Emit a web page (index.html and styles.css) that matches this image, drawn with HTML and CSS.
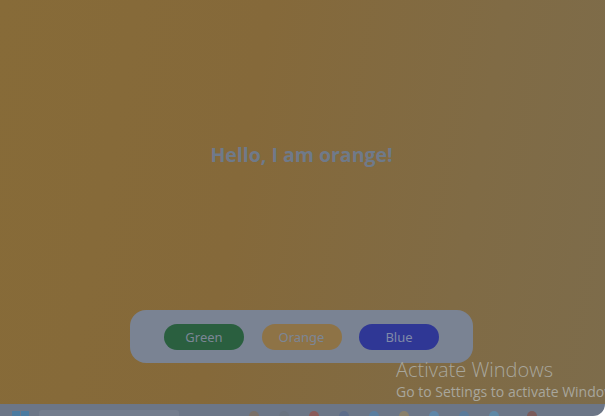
FILE: index.html
```html
<!DOCTYPE html>
<html>
<head>
<meta charset="utf-8">
<link rel="stylesheet" href="styles.css">
</head>
<body>
<div class="screen">
  <main class="app">
    <h1 class="title">Hello, I am orange!</h1>
    <div class="panel">
      <button class="btn btn-green">Green</button>
      <button class="btn btn-orange">Orange</button>
      <button class="btn btn-blue">Blue</button>
    </div>
  </main>
  <div class="taskbar">
    <span class="tb-start"><i></i><i></i></span>
    <span class="tb-search"></span>
    <span class="tb-icon c1"></span>
    <span class="tb-icon c2"></span>
    <span class="tb-icon c3"></span>
    <span class="tb-icon c4"></span>
    <span class="tb-icon c5"></span>
    <span class="tb-icon c6"></span>
    <span class="tb-icon c7"></span>
    <span class="tb-icon c8"></span>
    <span class="tb-icon c9"></span>
    <span class="tb-icon c10"></span>
  </div>
  <div class="watermark">
    <div class="wm-title">Activate Windows</div>
    <div class="wm-sub">Go to Settings to activate Windows</div>
  </div>
</div>
</body>
</html>
```
FILE: styles.css
```css
* { box-sizing: border-box; }
html, body {
  margin: 0;
  background: #ffffff;
  width: 614px;
  height: 416px;
  overflow: hidden;
}
.screen {
  position: relative;
  width: 605px;
  height: 416px;
  overflow: hidden;
  border-bottom-right-radius: 12px;
  display: flex;
  flex-direction: column;
}
.app {
  height: 404px;
  background: linear-gradient(100deg, #876b38 0%, #85693a 40%, #806b45 75%, #7d6c4b 100%);
  display: flex;
  flex-direction: column;
  align-items: center;
  padding-top: 142px;
  padding-right: 2px;
}
.title {
  margin: 0;
  font-family: "Open Sans", sans-serif;
  font-weight: 700;
  font-size: 19.5px;
  line-height: 26px;
  color: #6f7a8a;
}
.panel {
  margin-top: 142px;
  width: 343px;
  height: 53px;
  border-radius: 16px;
  background: #7a8393;
  display: flex;
  align-items: center;
  justify-content: center;
  gap: 17.5px;
}
.btn {
  width: 80px;
  height: 26px;
  border: none;
  border-radius: 13px;
  font-family: "Noto Sans", sans-serif;
  font-size: 13px;
  color: #7c8696;
  padding: 0;
}
.btn-green { background: #2a5f3f; }
.btn-orange { background: #8e7346; }
.btn-blue { background: #2f3795; color: #8089a8; }
.taskbar {
  height: 12px;
  background: #6c7687;
  display: flex;
  align-items: flex-end;
  padding-left: 12px;
}
.tb-start { display: flex; gap: 1px; margin-right: 10px; }
.tb-start i { display: block; width: 8px; height: 5px; background: #4a7aa0; }
.tb-search { width: 140px; height: 6px; background: #747d8d; border-radius: 3px 3px 0 0; margin-right: 70px; }
.tb-icon { width: 10px; height: 5px; border-radius: 5px 5px 0 0; margin-right: 20px; background: #66707f; }
.c1 { background: #7a7068; }
.c2 { background: #6a7380; }
.c3 { background: #8a5a5a; }
.c4 { background: #5c6c8a; }
.c5 { background: #5a7ea0; }
.c6 { background: #8a806a; }
.c7 { background: #5e86a8; }
.c8 { background: #5a7a9a; }
.c9 { background: #5e88a6; }
.c10 { background: #7a5a5a; margin-left: 8px; }
.watermark {
  position: absolute;
  left: 396px;
  top: 357px;
  font-family: "Open Sans", sans-serif;
  color: #a8a69c;
  white-space: nowrap;
}
.wm-title {
  font-size: 20px;
  font-weight: 300;
  line-height: 25px;
}
.wm-sub {
  font-size: 14px;
  line-height: 20px;
}
```
